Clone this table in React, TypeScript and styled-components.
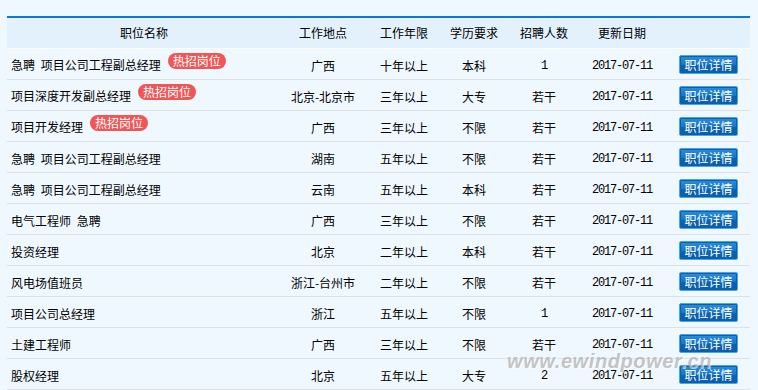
import React from "react";
import styled, { createGlobalStyle } from "styled-components";

type Job = {
  title: string;
  hot?: boolean;
  place: string;
  years: string;
  edu: string;
  count: string;
  date: string;
};

const jobs: Job[] = [
  { title: "急聘 项目公司工程副总经理", hot: true, place: "广西", years: "十年以上", edu: "本科", count: "1", date: "2017-07-11" },
  { title: "项目深度开发副总经理", hot: true, place: "北京-北京市", years: "三年以上", edu: "大专", count: "若干", date: "2017-07-11" },
  { title: "项目开发经理", hot: true, place: "广西", years: "三年以上", edu: "不限", count: "若干", date: "2017-07-11" },
  { title: "急聘 项目公司工程副总经理", place: "湖南", years: "五年以上", edu: "不限", count: "若干", date: "2017-07-11" },
  { title: "急聘 项目公司工程副总经理", place: "云南", years: "五年以上", edu: "本科", count: "若干", date: "2017-07-11" },
  { title: "电气工程师 急聘", place: "广西", years: "三年以上", edu: "不限", count: "若干", date: "2017-07-11" },
  { title: "投资经理", place: "北京", years: "二年以上", edu: "本科", count: "若干", date: "2017-07-11" },
  { title: "风电场值班员", place: "浙江-台州市", years: "二年以上", edu: "不限", count: "若干", date: "2017-07-11" },
  { title: "项目公司总经理", place: "浙江", years: "五年以上", edu: "不限", count: "1", date: "2017-07-11" },
  { title: "土建工程师", place: "广西", years: "三年以上", edu: "不限", count: "若干", date: "2017-07-11" },
  { title: "股权经理", place: "北京", years: "五年以上", edu: "大专", count: "2", date: "2017-07-11" },
];

const widths = [274, 84, 78, 62, 78, 78, 89];
const heads = ["职位名称", "工作地点", "工作年限", "学历要求", "招聘人数", "更新日期", ""];

const isAscii = (s: string) => /^[\x00-\x7f]+$/.test(s);

const App: React.FC = () => {
  return (
    <Page>
      <GlobalStyle />
      <JobTable>
        <colgroup>
          {widths.map((w, i) => (
            <col key={i} style={{ width: w }} />
          ))}
        </colgroup>
        <thead>
          <tr>
            {heads.map((h, i) => (
              <HeadCell key={i}>{h}</HeadCell>
            ))}
          </tr>
        </thead>
        <tbody>
          {jobs.map((j, i) => (
            <Row key={i}>
              <NameCell>
                {j.title}
                {j.hot && <HotBadge>热招岗位</HotBadge>}
              </NameCell>
              <Cell>{j.place}</Cell>
              <Cell>{j.years}</Cell>
              <Cell>{j.edu}</Cell>
              <Cell $mono={isAscii(j.count)}>{j.count}</Cell>
              <Cell $mono>{j.date}</Cell>
              <ButtonCell>
                <DetailButton type="button">职位详情</DetailButton>
              </ButtonCell>
            </Row>
          ))}
        </tbody>
      </JobTable>
      <Watermark>www.ewindpower.cn</Watermark>
    </Page>
  );
};

const GlobalStyle = createGlobalStyle`
  html, body {
    margin: 0;
    padding: 0;
    background: #f0f8ff;
  }
  body {
    font-family: "Noto Sans CJK SC", "Liberation Sans", sans-serif;
    font-size: 12px;
    color: #000;
  }
`;

const Page = styled.div`
  position: relative;
  width: 758px;
  height: 390px;
  overflow: hidden;
  padding: 16px 8px 0 7px;
  box-sizing: border-box;
  background: #f0f8ff;
`;

const JobTable = styled.table`
  width: 743px;
  border-collapse: collapse;
  table-layout: fixed;
  border-top: 2px solid #0b79d3;
`;

const HeadCell = styled.th`
  height: 30px;
  padding: 0;
  background: #e3f1fd;
  border-bottom: 1px solid #fafdff;
  font-weight: normal;
  font-size: 12px;
  text-align: center;
  vertical-align: middle;
  line-height: 14px;
`;

const Row = styled.tr`
  border-bottom: 1px solid #dde1e6;
`;

const Cell = styled.td<{ $mono?: boolean }>`
  height: 26px;
  padding: 4px 0 0;
  text-align: center;
  vertical-align: middle;
  white-space: nowrap;
  line-height: 14px;
  font-family: ${(p) =>
    p.$mono ? `"Liberation Mono", monospace` : `"Noto Sans CJK SC", sans-serif`};
  letter-spacing: ${(p) => (p.$mono ? "-1.2px" : "0")};
`;

const NameCell = styled(Cell)`
  text-align: left;
  padding-left: 4px;
  white-space: pre;
  word-spacing: 3px;
`;

const HotBadge = styled.span`
  display: inline-block;
  position: relative;
  top: -5px;
  margin-left: 7px;
  padding: 0 5px;
  height: 16px;
  line-height: 16px;
  border-radius: 8px;
  background: #f05656;
  color: #fff;
  font-size: 12px;
  word-spacing: 0;
  vertical-align: middle;
`;

const ButtonCell = styled.td`
  padding: 1px 0 0 6px;
  text-align: center;
  vertical-align: middle;
`;

const DetailButton = styled.button`
  width: 59px;
  height: 19px;
  padding: 0;
  margin: 0;
  border: 1px solid #4aa6ec;
  border-radius: 2px;
  background: linear-gradient(#2b8ddd 0%, #1676c9 50%, #0a62b2 51%, #0b5fac 100%);
  box-shadow: inset 0 0 0 1px #0d5ea9;
  color: #fff;
  font-family: "Noto Sans CJK SC", sans-serif;
  font-size: 12px;
  line-height: 17px;
  cursor: pointer;
`;

const Watermark = styled.div`
  position: absolute;
  left: 507px;
  top: 350px;
  font-family: "Liberation Sans", Arial, sans-serif;
  font-weight: bold;
  font-style: italic;
  font-size: 20px;
  letter-spacing: 0.6px;
  color: rgba(150, 150, 150, 0.55);
  text-shadow: 1px 1px 0 rgba(255, 255, 255, 0.6);
  pointer-events: none;
`;

export default App;
